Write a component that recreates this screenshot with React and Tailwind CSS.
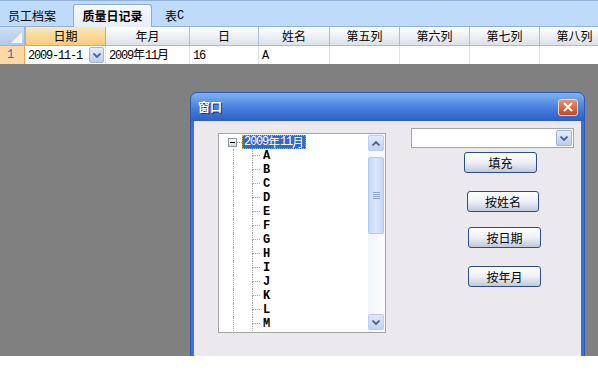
import React from "react";

const WIDE = /[\u3000-\u9fff\uff00-\uffef]/;

// Split a label into CJK / half-width runs so digits keep the narrow 6px cell
function Mixed({ text }) {
  const runs = [];
  for (const ch of text) {
    const wide = WIDE.test(ch);
    const last = runs[runs.length - 1];
    if (last && last.wide === wide) last.s += ch;
    else runs.push({ wide, s: ch });
  }
  return runs.map((r, i) =>
    r.wide ? (
      <span key={i} className="font-['Noto_Sans_CJK_SC',sans-serif]">
        {r.s}
      </span>
    ) : (
      <span key={i} className="font-['Liberation_Mono',monospace] tracking-[-1.2px]">
        {r.s}
      </span>
    )
  );
}

function Chevron({ up = false, color = "#4d6185" }) {
  return (
    <svg width="8" height="5" viewBox="0 0 8 5">
      <path
        d={up ? "M0.5 4.5 L4 1 L7.5 4.5" : "M0.5 0.5 L4 4 L7.5 0.5"}
        fill="none"
        stroke={color}
        strokeWidth="1.8"
      />
    </svg>
  );
}

function DropButton({ className = "" }) {
  return (
    <div
      className={
        "flex items-center justify-center rounded-[2px] border border-[#9fb6dc] bg-gradient-to-b from-[#e4ecf9] to-[#b9cdec] " +
        className
      }
    >
      <Chevron />
    </div>
  );
}

const columns = [
  { label: "日期", w: "w-[81px]", active: true },
  { label: "年月", w: "w-[84px]" },
  { label: "日", w: "w-[69px]" },
  { label: "姓名", w: "w-[71px]" },
  { label: "第五列", w: "w-[70px]" },
  { label: "第六列", w: "w-[70px]" },
  { label: "第七列", w: "w-[70px]" },
  { label: "第八列", w: "w-[70px]" },
];

function TabBar() {
  return (
    <div className="flex h-[27px] shrink-0 items-end border-t border-b border-[#92b2da] bg-[#bfdbfb]">
      <div className="flex h-[21px] w-[73px] items-center pl-[8px]">员工档案</div>
      <div className="mb-[-1px] flex h-[23px] w-[79px] items-center justify-center rounded-t-[3px] border border-b-0 border-[#8eadd6] bg-gradient-to-b from-[#f6f9fe] to-[#e4eefb] font-bold">
        质量日记录
      </div>
      <div className="ml-[13px] flex h-[21px] items-center">
        <Mixed text="表C" />
      </div>
    </div>
  );
}

function Grid() {
  const cells = [
    { w: "w-[81px]", text: "2009-11-1", drop: true },
    { w: "w-[84px]", text: "2009年11月" },
    { w: "w-[69px]", text: "16" },
    { w: "w-[71px]", text: "A" },
    { w: "w-[70px]", text: "" },
    { w: "w-[70px]", text: "" },
    { w: "w-[70px]", text: "" },
    { w: "w-[70px]", text: "" },
  ];
  return (
    <div className="shrink-0 overflow-hidden">
      <div className="flex h-[19px]">
        <div className="flex w-[25px] shrink-0 items-end justify-end border-r border-b border-[#9fb5d3] bg-gradient-to-b from-[#cfdff4] to-[#b1c8e8] pr-[2px] pb-[2px]">
          <svg width="11" height="11" viewBox="0 0 11 11">
            <path d="M11 0 L11 11 L0 11 Z" fill="#f4f8fd" />
          </svg>
        </div>
        {columns.map((c) => (
          <div
            key={c.label}
            className={
              c.w +
              " flex shrink-0 items-center justify-center " +
              (c.active
                ? "border-x border-b border-[#f0a444] bg-gradient-to-b from-[#fde7b6] to-[#f8cb7c]"
                : "border-r border-b border-[#a9bdd7] bg-gradient-to-b from-white to-[#dbe1ea]")
            }
          >
            {c.label}
          </div>
        ))}
      </div>
      <div className="flex h-[18px] bg-white">
        <div className="flex w-[25px] shrink-0 items-center border-r border-[#f0a444] bg-[#fcd9a2] pl-[7px] text-[#3a66b8]">
          <Mixed text="1" />
        </div>
        {cells.map((c, i) => (
          <div
            key={i}
            className={c.w + " flex shrink-0 items-center border-r border-[#e2e2e2] pl-[2px]"}
          >
            <span className="flex-1 pl-px">
              <Mixed text={c.text} />
            </span>
            {c.drop && <DropButton className="mr-px h-[16px] w-[15px]" />}
          </div>
        ))}
      </div>
    </div>
  );
}

const letters = ["A", "B", "C", "D", "E", "F", "G", "H", "I", "J", "K", "L", "M"];

function ScrollButton({ up }) {
  return (
    <div className="flex h-[16px] w-[16px] items-center justify-center rounded-[2px] border border-[#bccdef] bg-gradient-to-b from-[#dfe9fc] to-[#bfd3f7]">
      <Chevron up={up} />
    </div>
  );
}

function Tree() {
  return (
    <div className="ml-[24px] mt-[12px] flex h-[200px] w-[168px] shrink-0 border border-[#a5a5a5] bg-white">
      <div className="flex-1 overflow-hidden pt-px">
        <div className="flex h-[14px] items-center">
          <div className="ml-[9px] flex h-[9px] w-[9px] items-center justify-center border border-[#8c9aa8] bg-gradient-to-b from-white to-[#d8d8d0]">
            <div className="h-px w-[5px] bg-black" />
          </div>
          <div className="w-[5px] border-t border-dotted border-[#a0a0a0]" />
          <div className="flex h-[14px] items-center border border-dotted border-[#d8b048] bg-[#316ac5] px-px text-white">
            <Mixed text="2009年11月" />
          </div>
        </div>
        {letters.map((l) => (
          <div key={l} className="flex h-[14px]">
            <div className="w-[14px] shrink-0" />
            <div className="w-[19px] shrink-0 border-l border-dotted border-[#a0a0a0]" />
            <div className="flex w-[8px] shrink-0 flex-col">
              <div className="h-[7px] border-l border-b border-dotted border-[#a0a0a0]" />
              <div className="h-[7px] border-l border-dotted border-[#a0a0a0]" />
            </div>
            <div className="flex items-center pl-[3px] font-['Liberation_Mono',monospace] font-bold">
              {l}
            </div>
          </div>
        ))}
      </div>
      <div className="flex w-[17px] shrink-0 flex-col bg-gradient-to-r from-[#f1f5fd] to-[#fcfdff] pt-px pr-px pb-[2px]">
        <ScrollButton up />
        <div className="flex-1">
          <div className="mt-[6px] flex h-[77px] w-[16px] flex-col items-center justify-center gap-[1px] rounded-[2px] border border-[#b4c9ee] bg-gradient-to-r from-[#c7d9fa] via-[#dbe7fc] to-[#c4d6f7]">
            <div className="h-px w-[7px] bg-[#8ca5d4]" />
            <div className="h-px w-[7px] bg-[#8ca5d4]" />
            <div className="h-px w-[7px] bg-[#8ca5d4]" />
            <div className="h-px w-[7px] bg-[#8ca5d4]" />
          </div>
        </div>
        <ScrollButton />
      </div>
    </div>
  );
}

function Button({ label, className }) {
  return (
    <div
      className={
        "flex h-[21px] items-center justify-center rounded-[3px] border border-[#2c4e86] bg-gradient-to-b from-[#fefefe] via-[#eef0f6] to-[#bfc9dc] " +
        className
      }
    >
      {label}
    </div>
  );
}

function Dialog() {
  return (
    <div className="ml-[190px] mt-[27px] flex h-[300px] w-[395px] flex-col rounded-t-[7px] border border-[#2a59bd] bg-[#3d71d6]">
      <div className="flex h-[28px] shrink-0 items-center justify-between rounded-t-[6px] bg-gradient-to-b from-[#82b2ee] via-[#4a82de] to-[#2d5ec6] pl-[7px] pr-[6px]">
        <span className="font-bold text-white [text-shadow:1px_1px_0_#0c2a78]">窗口</span>
        <div className="flex h-[17px] w-[20px] items-center justify-center rounded-[3px] border border-[#f3d6cc] bg-gradient-to-b from-[#ee8f6a] to-[#c9431c]">
          <svg width="10" height="10" viewBox="0 0 10 10">
            <path d="M1 1 L9 9 M9 1 L1 9" stroke="white" strokeWidth="2" />
          </svg>
        </div>
      </div>
      <div className="mx-[3px] flex flex-1 items-start bg-[#ebe9ed]">
        <Tree />
        <div className="ml-[25px] mt-[7px] flex w-[163px] flex-col">
          <div className="flex h-[20px] items-center justify-end border border-[#a5a5a5] bg-white pr-px">
            <DropButton className="h-[16px] w-[16px]" />
          </div>
          <Button label="填充" className="ml-[53px] mt-[4px] w-[73px]" />
          <Button label="按姓名" className="ml-[56px] mt-[18px] w-[72px]" />
          <Button label="按日期" className="ml-[57px] mt-[15px] w-[73px]" />
          <Button label="按年月" className="ml-[57px] mt-[18px] w-[73px]" />
        </div>
      </div>
    </div>
  );
}

export default function App() {
  return (
    <div className="flex h-[384px] w-[598px] flex-col overflow-hidden bg-white font-['Noto_Sans_CJK_SC',sans-serif] text-[12px] leading-none text-black">
      <TabBar />
      <Grid />
      <div className="h-[292px] shrink-0 overflow-hidden bg-[#808080] pt-px">
        <Dialog />
      </div>
    </div>
  );
}
